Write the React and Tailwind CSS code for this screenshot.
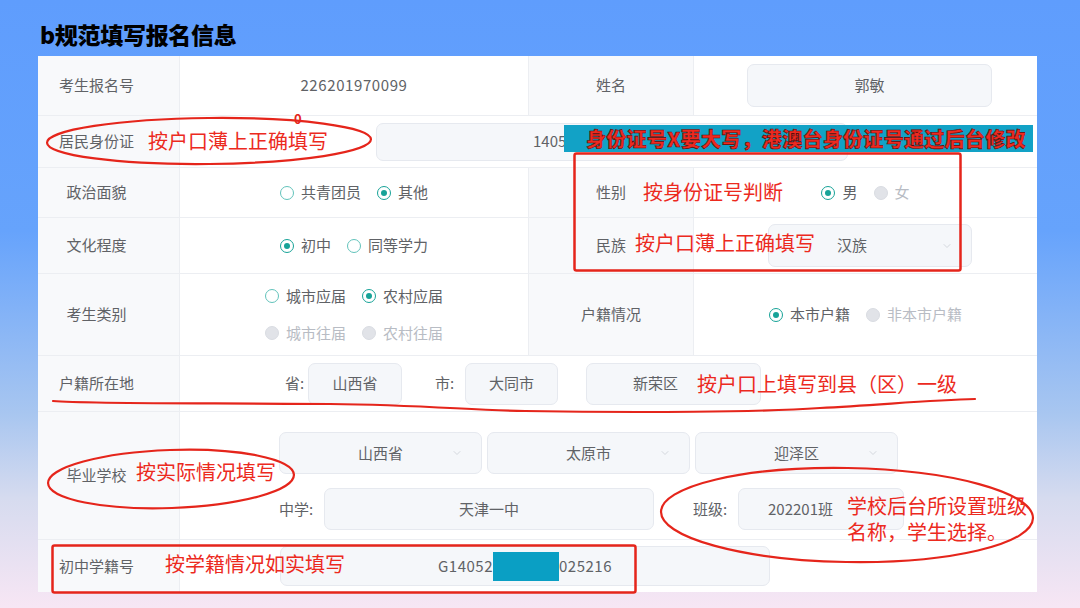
import React from "react";
import { ChevronDown } from "lucide-react";

const FONT = "font-['Noto_Sans_CJK_SC','Noto_Sans',sans-serif]";

const Radio = ({ label, checked, disabled }) => (
  <div className="flex items-center gap-[7px]">
    {disabled ? (
      <span className="w-[14px] h-[14px] rounded-full bg-[#e1e3e8] border border-[#d9dce2]" />
    ) : checked ? (
      <span className="w-[14px] h-[14px] rounded-full border-[1.5px] border-[#17a398] bg-white flex items-center justify-center">
        <span className="w-[6px] h-[6px] rounded-full bg-[#17a398]" />
      </span>
    ) : (
      <span className="w-[14px] h-[14px] rounded-full border-[1.5px] border-[#62c3bb] bg-white" />
    )}
    <span className={`text-[15px] ${disabled ? "text-[#b8bcc4]" : "text-[#606266]"}`}>{label}</span>
  </div>
);

const Box = ({ children, className = "", chevron, textClass = "justify-center" }) => (
  <div
    className={`relative flex items-center rounded-[7px] bg-[#f5f7fa] border border-[#e6e9ef] text-[15px] text-[#606266] ${textClass} ${className}`}
  >
    {children}
    {chevron && (
      <ChevronDown size={12} strokeWidth={1.5} className="absolute right-[18px] text-[#c8ccd3]" />
    )}
  </div>
);

const Label = ({ children }) => (
  <div className="w-[142px] shrink-0 flex items-center justify-center pr-6 bg-[#f8f9fb] border-r border-[#eceef2] text-[15px] text-[#606266]">
    {children}
  </div>
);

const Label2 = ({ children }) => (
  <div className="w-[166px] shrink-0 flex items-center justify-center bg-[#f8f9fb] border-x border-[#eceef2] text-[15px] text-[#606266]">
    {children}
  </div>
);

const Note = ({ children, className }) => (
  <span className={`absolute text-[20px] leading-[20px] text-[#ec2a1e] whitespace-nowrap ${className}`}>
    {children}
  </span>
);

export default function App() {
  return (
    <div
      className={`relative w-[1080px] h-[608px] overflow-hidden ${FONT} bg-[linear-gradient(180deg,#5f9dfd_0%,#66a3fc_38%,#a8c6f0_68%,#d6dbef_82%,#f7e6f4_100%)]`}
    >
      <h1 className="h-[56px] pl-[40px] pt-[19px] text-[23px] leading-[30px] font-black text-black tracking-[-0.3px]">
        b规范填写报名信息
      </h1>

      <div className="ml-[38px] w-[999px] bg-white">
        {/* 考生报名号 / 姓名 */}
        <div className="flex h-[60px] border-b border-[#eceef2]">
          <Label>考生报名号</Label>
          <div className="w-[348px] flex items-center justify-center text-[15px] tracking-[0.6px] text-[#606266]">226201970099</div>
          <Label2>姓名</Label2>
          <div className="flex-1 flex items-center">
            <Box className="ml-[53px] w-[245px] h-[43px]">郭敏</Box>
          </div>
        </div>

        {/* 居民身份证 */}
        <div className="flex h-[52px] border-b border-[#eceef2]">
          <Label>居民身份证</Label>
          <div className="flex-1 flex items-center">
            <Box className="ml-[196px] w-[472px] h-[38px]" textClass="justify-start pl-[156px]">
              140521200612250015
            </Box>
          </div>
        </div>

        {/* 政治面貌 / 性别 */}
        <div className="flex h-[50px] border-b border-[#eceef2]">
          <Label>政治面貌</Label>
          <div className="w-[348px] flex items-center justify-center gap-4">
            <Radio label="共青团员" />
            <Radio label="其他" checked />
          </div>
          <Label2>性别</Label2>
          <div className="flex-1 flex items-center justify-center gap-4">
            <Radio label="男" checked />
            <Radio label="女" disabled />
          </div>
        </div>

        {/* 文化程度 / 民族 */}
        <div className="flex h-[56px] border-b border-[#eceef2]">
          <Label>文化程度</Label>
          <div className="w-[348px] flex items-center justify-center gap-4">
            <Radio label="初中" checked />
            <Radio label="同等学力" />
          </div>
          <Label2>民族</Label2>
          <div className="flex-1 flex items-center">
            <Box className="ml-[74px] w-[204px] h-[43px]" textClass="justify-start pl-[68px]" chevron>
              汉族
            </Box>
          </div>
        </div>

        {/* 考生类别 / 户籍情况 */}
        <div className="flex h-[82px] border-b border-[#eceef2]">
          <Label>考生类别</Label>
          <div className="w-[348px] flex items-center justify-center">
            <div className="grid grid-cols-[auto_auto] gap-x-4 gap-y-[14px]">
              <Radio label="城市应届" />
              <Radio label="农村应届" checked />
              <Radio label="城市往届" disabled />
              <Radio label="农村往届" disabled />
            </div>
          </div>
          <Label2>户籍情况</Label2>
          <div className="flex-1 flex items-center justify-center gap-4">
            <Radio label="本市户籍" checked />
            <Radio label="非本市户籍" disabled />
          </div>
        </div>

        {/* 户籍所在地 */}
        <div className="flex h-[56px] border-b border-[#eceef2]">
          <Label>户籍所在地</Label>
          <div className="flex-1 flex items-center text-[15px] text-[#606266]">
            <span className="ml-[105px] w-[23px]">省:</span>
            <Box className="w-[94px] h-[42px]">山西省</Box>
            <span className="ml-[33px] w-[30px]">市:</span>
            <Box className="w-[93px] h-[42px]">大同市</Box>
            <Box className="ml-[28px] w-[175px] h-[42px]" textClass="justify-start pl-[46px]">
              新荣区
            </Box>
          </div>
        </div>

        {/* 毕业学校 */}
        <div className="flex h-[128px] border-b border-[#eceef2]">
          <Label>毕业学校</Label>
          <div className="flex-1 flex flex-col pt-[20px] pl-[99px] gap-[14px]">
            <div className="flex gap-[5px]">
              <Box className="w-[203px] h-[42px]" chevron>山西省</Box>
              <Box className="w-[203px] h-[42px]" chevron>太原市</Box>
              <Box className="w-[203px] h-[42px]" chevron>迎泽区</Box>
            </div>
            <div className="flex items-center text-[15px] text-[#606266]">
              <span className="w-[45px]">中学:</span>
              <Box className="w-[330px] h-[42px]">天津一中</Box>
              <span className="ml-[39px] w-[45px]">班级:</span>
              <Box className="w-[166px] h-[42px]" textClass="justify-start pl-[29px]">202201班</Box>
            </div>
          </div>
        </div>

        {/* 初中学籍号 */}
        <div className="flex h-[52px]">
          <Label>初中学籍号</Label>
          <div className="flex-1 flex items-center">
            <Box className="ml-[100px] w-[490px] h-[40px]">
              <span className="tracking-[0.5px]">G14052</span>
              <span className="inline-block w-[66px] h-[29px] bg-[#0a9fc4]" />
              <span className="tracking-[0.5px]">025216</span>
            </Box>
          </div>
        </div>
      </div>

      {/* annotation overlay */}
      <svg className="absolute inset-0 pointer-events-none" width="1080" height="608" viewBox="0 0 1080 608" fill="none">
        <ellipse cx="209" cy="141" rx="162" ry="23" stroke="#e5251b" strokeWidth="2.2" transform="rotate(-0.6 209 141)" />
        <ellipse cx="171" cy="479" rx="123" ry="29" stroke="#e5251b" strokeWidth="2.2" transform="rotate(-2 171 479)" />
        <ellipse cx="847" cy="515" rx="186" ry="47" stroke="#e5251b" strokeWidth="2.2" transform="rotate(1 847 515)" />
        <rect x="574.5" y="153.5" width="386" height="117" rx="2" stroke="#e5251b" strokeWidth="2.5" />
        <rect x="52.5" y="545.5" width="583" height="47" rx="2" stroke="#e5251b" strokeWidth="2.5" />
        <path
          d="M53 401 C 90 404, 200 403, 330 404 C 420 405, 470 410, 525 411 C 640 413, 760 412, 820 408 C 880 405, 930 400, 975 399"
          stroke="#e5251b"
          strokeWidth="2.2"
          strokeLinecap="round"
        />
      </svg>

      <span className="absolute left-[294px] top-[112px] text-[13px] leading-[13px] font-bold text-[#e5251b]">0</span>
      <Note className="left-[148px] top-[131px]">按户口薄上正确填写</Note>
      <Note className="left-[643px] top-[182px]">按身份证号判断</Note>
      <Note className="left-[635px] top-[233px]">按户口薄上正确填写</Note>
      <Note className="left-[697px] top-[374px]">按户口上填写到县（区）一级</Note>
      <Note className="left-[136px] top-[462px]">按实际情况填写</Note>
      <Note className="left-[847px] top-[493px] leading-[26px]">
        学校后台所设置班级
        <br />
        名称，学生选择。
      </Note>
      <Note className="left-[165px] top-[554px]">按学籍情况如实填写</Note>

      <div className="absolute left-[564px] top-[125px] w-[469px] h-[27px] bg-[#12a2c6] pl-[22px] text-[20px] leading-[27px] font-black text-[#ee2a20] whitespace-nowrap [-webkit-text-stroke:0.6px_#5b0a06] tracking-[0.3px]">
        身份证号X要大写，港澳台身份证号通过后台修改
      </div>
    </div>
  );
}
